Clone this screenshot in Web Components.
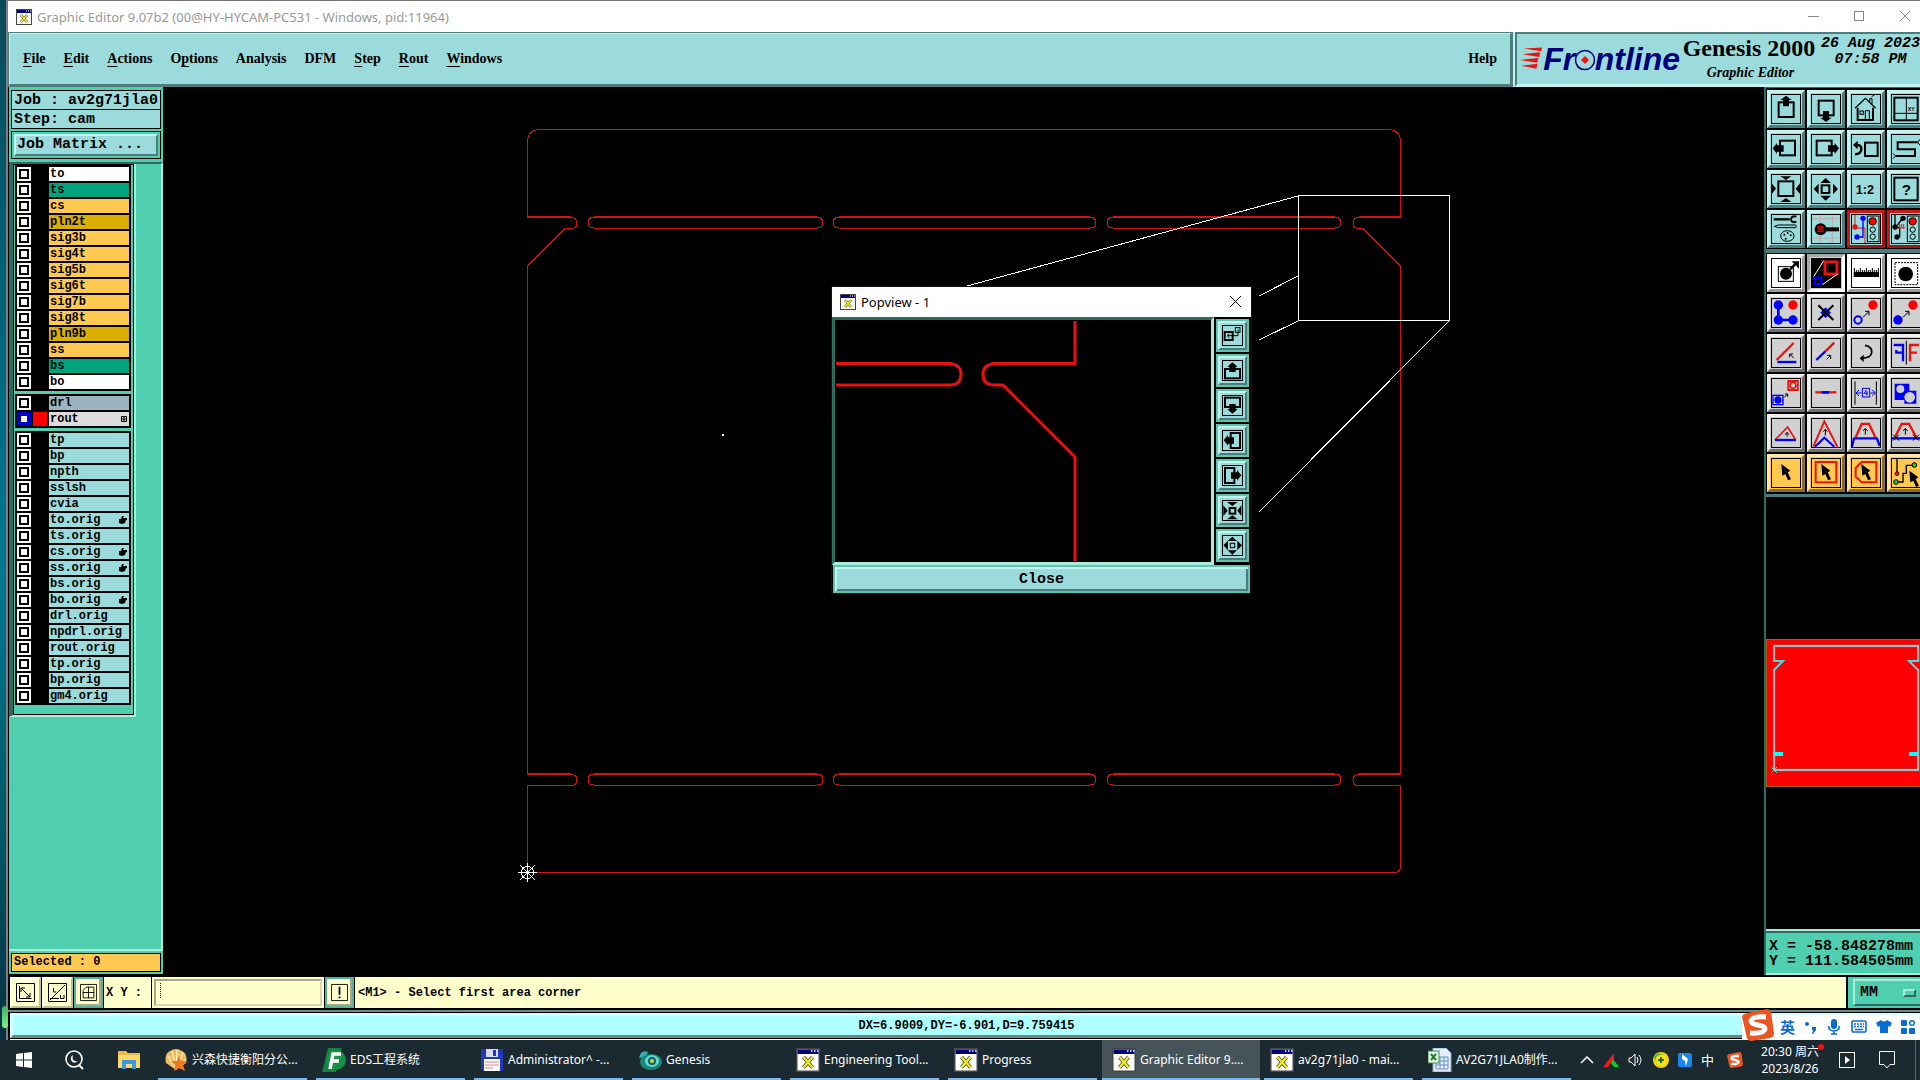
<!DOCTYPE html>
<html lang="en">
<head>
<meta charset="utf-8">
<title>Graphic Editor 9.07b2</title>
<style>
html,body{margin:0;height:100%}
body{display:flex;flex-direction:column;height:100vh;overflow:hidden;background:#000;color:#000;font-family:"Liberation Mono",monospace;
--face:#9bdbdb;--lite:#c4f4f2;--dark:#4c7c7c;--mint:#50cfb0;--mlite:#a8ecdc;--mdark:#2c6c5e;--ui:"Noto Sans","Noto Sans CJK SC",sans-serif}
</style>
</head>
<body>
<gx-editor></gx-editor>
<gx-taskbar></gx-taskbar>
<script>
const define=(name,html,init)=>{
  const t=document.createElement('template');
  customElements.define(name,class extends HTMLElement{
    connectedCallback(){
      if(this.shadowRoot)return;
      t.innerHTML=typeof html==='function'?html(this):html;
      this.attachShadow({mode:'open'}).append(t.content.cloneNode(true));
      if(init)init(this,this.shadowRoot);
    }
  });
};
const B='#0000ff',R='#e81410',K='#000';
const box=(x,y,w,h,s=5,c=K,f='none')=>`<rect x="${x}" y="${y}" width="${w}" height="${h}" fill="${f}" stroke="${c}" stroke-width="${s}"/>`;
const ln=(d,c=K,s=3,x='')=>`<path d="${d}" fill="none" stroke="${c}" stroke-width="${s}" ${x}/>`;
const fl=(d,c=K)=>`<path d="${d}" fill="${c}"/>`;
const dot=(x,y,r,c=K,s='none',w=0)=>`<circle cx="${x}" cy="${y}" r="${r}" fill="${c}" stroke="${s}" stroke-width="${w}"/>`;
const tx=(x,y,z,t)=>`<text x="${x}" y="${y}" font-family="Liberation Sans" font-weight="bold" font-size="${z}">${t}</text>`;
const light=box(49,6,35,77,3)+dot(65,22,11,'#f00',K,3)+dot(65,47,8,'none',K,3)+dot(65,68,8,'none',K,3);
const cursor=fl('M31 18L58 38L50 43L60 64L51 67L43 48L34 53Z');
/* toolbox glyphs on a 90-unit grid */
const ICON={
 up:box(23,25,45,44,6)+fl('M45 5L62 18H54V37H36V18H28Z'),
 down:box(23,20,45,44,6)+fl('M45 84L62 71H54V51H36V71H28Z'),
 home:ln('M12 43L43 13L74 43',K,4)+ln('M20 41V78H66V41',K,6)+ln('M56 25V14H63V30')+box(27,51,10,10,3)+ln('M43 78V50H55V78')+ln('M62 8L70 3',K,3),
 xy:box(10,11,70,68,6)+ln('M46 11V79M10 58H80')+tx(50,50,16,'XY'),
 left:box(27,20,45,44,6)+fl('M5 43L18 27V34H38V53H18V60Z'),
 right:box(17,20,45,44,6)+fl('M84 43L71 27V34H51V53H71V60Z'),
 back:box(42,26,38,40,6)+ln('M12 33H20Q32 34 31 46Q30 60 12 61',K,7)+fl('M6 33L20 20V46Z'),
 snake:ln('M80 25H20V46H72V66H14',K,6)+ln('M80 25L88 15M80 25L88 35M14 66L6 58M14 66L6 74'),
 zin:box(22,22,45,44,6)+fl('M28 7H61L45 18ZM28 84H61L45 72ZM2 28V60L15 44ZM87 28V60L74 44Z'),
 zout:box(32,34,23,23,6)+fl('M28 27H60L44 12ZM28 65H60L44 80ZM23 29V61L8 45ZM66 29V61L81 45Z'),
 half:tx(14,59,38,'1:2'),
 help:box(10,11,70,68,6)+tx(32,62,46,'?'),
 tools:ln('M8 16H56',K,7)+ln('M76 8Q62 4 60 16Q62 28 76 23',K,6)+ln('M10 37L22 33H74Q78 37 74 41H22Z')+`<ellipse cx="49" cy="66" rx="20" ry="16" fill="none" stroke="#000" stroke-width="3"/>`+dot(40,62,3)+dot(50,57,3)+dot(59,64,3)+dot(44,74,3),
 probe:ln('M28 0V90M64 0V90M0 14H90M0 72H90','#c9a7b0',3)+ln('M40 46H84',K,12)+dot(29,46,18)+box(21,38,15,15,3,R)+box(27,44,4,4,3,R),
 net1:ln('M12 0V42M12 42H42V90',R)+ln('M36 12V69H18',B,4)+dot(12,39,8,R)+dot(36,13,8,B)+dot(18,69,8,B)+light,
 net2:ln('M12 0V42L36 12M26 42V68H18M12 40H26',K,4)+ln('M20 42V30M26 42V30M32 42V30M38 42V30M16 42H42',R,3)+dot(12,39,8)+dot(36,13,8)+dot(18,69,8)+light,
 sel1:box(22,26,45,44,3)+dot(45,47,18)+ln('M58 34L74 17',K,7)+fl('M62 10H84V32Z'),
 pop:`<rect width="90" height="90"/>`+box(42,12,36,36,9,R)+box(11,59,20,20,7,B)+ln('M8 56L38 8M34 80L80 48','#fff'),
 ruler:fl('M8 42H84V57H8Z')+ln('M10 30V44M16 36V44M22 36V44M28 30V44M34 36V44M40 36V44M46 30V44M52 36V44M58 36V44M64 30V44M70 36V44M76 36V44M82 30V44'),
 selbox:`<rect x="12" y="14" width="68" height="66" fill="none" stroke="#000" stroke-width="3" stroke-dasharray="6 3"/>`+dot(44,48,22),
 chain:ln('M22 21V66H66',B,8)+dot(22,21,14,B)+dot(22,66,14,B)+dot(66,66,14,B)+dot(66,21,14,'#f00'),
 del:fl('M44 28L60 44L44 60L28 44Z',B)+ln('M22 22L67 66M67 22L22 66',K,6),
 cp:dot(66,21,14,'#f00')+dot(21,66,11,'none',B,6)+ln('M36 58L52 42')+ln('M42 40H54V52'),
 mv:dot(66,21,14,'#f00')+dot(21,66,14,B)+ln('M36 58L52 42')+ln('M42 40H54V52'),
 ang:ln('M17 66L68 15',R,7)+ln('M19 72H76',B,7)+ln('M68 60L56 48M56 58V48H66'),
 ext:ln('M16 66L43 40',B,7)+ln('M43 40L70 14',R,7)+ln('M47 64L58 53M48 52H59V63'),
 rot:ln('M42 22Q64 26 62 44Q60 60 32 61',K,5)+fl('M26 61L38 50V72Z'),
 mir:ln('M8 21H36V70M36 44H16V36',B,7)+ln('M46 8V80')+ln('M84 21H57V70M57 44H78',R,7),
 step:box(52,9,28,27,6,R,'#fff')+dot(66,22,9,'#d0d0d0',R,5)+box(6,52,30,28,4,B,'#d0d0d0')+dot(21,66,11,B)+ln('M40 58L50 48M42 48H50V56'),
 seg:ln('M13 43H76',R,7)+ln('M32 43H54',B,8),
 gap:ln('M12 10V80M76 10V80')+ln('M16 45H32M58 45H72M24 36L15 45L24 54M64 36L73 45L64 54',B,3)+box(34,31,22,26,3,B)+ln('M46 36L40 46H50M48 40V52',B,3),
 pads:fl('M11 17H55V38H76V77H40V66H11Z',B)+dot(28,33,12,'#d0d0d0')+dot(56,58,16,'#d0d0d0'),
 tri:ln('M12 66L50 27L74 66',R,5)+ln('M12 66H75',B,7)+ln('M48 56V44M42 50L48 43L54 50'),
 peak:ln('M7 86L40 10L79 86',R,6)+ln('M12 86L40 59L70 86',B,6)+ln('M43 52V34M37 41L43 34L49 41'),
 trap:ln('M14 58L32 18H54L73 58',R,7)+ln('M2 88L9 61H78L86 84',B,7)+ln('M43 50V32M36 39L43 31L50 39'),
 trap2:ln('M12 58L32 18H54L76 58',R,7)+ln('M0 61H90',B,7)+ln('M43 50V32M36 39L43 31L50 39')+ln('M6 50L24 68M24 50L6 68M66 50L84 68M84 50L66 68'),
 cur:cursor,
 curbox:box(14,12,62,61,6,R)+cursor,
 curpoly:ln('M32 12H76V73H32L14 56V30Z',R,6)+cursor,
 curnet:ln('M18 0V46M15 72H36V46H46V22H70',K,4)+dot(18,47,6,R,K,2)+dot(70,21,7,'#2c2',K,3)+dot(15,72,7,'#2c2',K,3)+`<g transform="translate(24 20)">${cursor}</g>`
};
/* popview glyphs on a 63-unit grid */
const MINI={
 link:box(8,21,24,24,6)+box(40,8,14,14,3)+ln('M48 14V32H16M22 26L15 32L22 38'),
 up:box(9,27,45,28,6)+fl('M31 7L47 20H41V36H22V20H16Z'),
 down:box(9,8,45,28,6)+fl('M31 56L47 43H41V27H22V43H16Z'),
 left:box(26,9,28,45,6)+fl('M5 31L18 15V22H36V41H18V47Z'),
 right:box(9,9,28,45,6)+fl('M58 31L45 15V22H27V41H45V47Z'),
 zin:box(23,24,17,17,6)+fl('M15 6H47L31 18ZM15 58H47L31 46ZM4 16V48L17 32ZM58 16V48L46 32Z'),
 zout:box(25,25,13,13,3)+fl('M17 18H45L31 5ZM17 46H45L31 59ZM18 17V46L4 31ZM46 17V46L60 31Z')
};
const svg=(vb,w,h,inner,extra='')=>`<svg viewBox="${vb}" width="${w}" height="${h}" ${extra} aria-hidden="true">${inner}</svg>`;
const xwin=n=>svg('0 0 16 16',n,n,`<rect x=".5" y=".5" width="15" height="15" fill="#fff" stroke="#444"/><rect x="1" y="1" width="14" height="3" fill="#000080"/><path d="M10 2h1M12 2h1M14 2h1" stroke="#fff"/><path d="M5 6L11 13M11 6L5 13" stroke="#333" stroke-width="2.4"/><path d="M5 6L11 13M11 6L5 13" stroke="#f4ec18" stroke-width="1.6"/>`);

define('gx-tool',el=>`<style>
:host{display:block}
button{display:block;box-sizing:border-box;width:38px;height:38px;margin:0;padding:1px;border:3px solid;border-color:var(--a) var(--b) var(--b) var(--a);background:var(--f);font:inherit}
svg{display:block;outline:1px solid #000;outline-offset:-1px;overflow:hidden}
:host([tone=teal]){--f:#9bdbdb;--a:#c4f4f2;--b:#4c7c7c}
:host([tone=red]){--f:#9bdbdb;--a:#c81818;--b:#a01414}
:host([tone=white]){--f:#fff;--a:#fff;--b:#9a9a9a}
:host([tone=grey]){--f:#d0d0d0;--a:#f0f0f0;--b:#707070}
:host([tone=navy]){--f:#d0d0d0;--a:#a8a8a8;--b:#fff}
:host([tone=gold]){--f:#ffc850;--a:#ffe6a8;--b:#8a6c2c}
</style><button type="button" aria-label="${el.getAttribute('icon')}">${svg('0 0 90 90',30,30,ICON[el.getAttribute('icon')])}</button>`);

define('gx-titlebar',`<style>
:host{display:flex;align-items:center;box-sizing:border-box;height:32px;padding:0 8px;gap:5px;background:#fff;border-top:1px solid #777;color:#999;font:13px/16px var(--ui)}
span{flex:1;white-space:nowrap}
button{border:0;background:none;padding:0;width:46px;height:28px;color:#888}
.c{display:flex;margin-right:-16px}
svg{display:block;margin:auto}
:host>svg{margin:0}
</style>${xwin(16)}<span><slot></slot></span><div class="c">
<button aria-label="Minimize">${svg('0 0 11 11',11,11,'<path d="M0 5.5H11" stroke="currentColor"/>')}</button>
<button aria-label="Maximize">${svg('0 0 11 11',11,11,'<rect x=".5" y=".5" width="9" height="9" fill="none" stroke="currentColor"/>')}</button>
<button aria-label="Close window">${svg('0 0 11 11',11,11,'<path d="M0 0L10 10M10 0L0 10" stroke="currentColor"/>')}</button></div>`);

define('gx-menubar',`<style>
:host{display:flex;align-items:center;box-sizing:border-box;height:55px;border:solid;border-width:2px 3px 3px 2px;border-color:var(--lite) var(--dark) var(--dark) var(--lite);background:var(--face);outline:1px solid var(--dark);outline-offset:-1px;padding:0 13px 0 13px;font:bold 14px/18px "Liberation Serif",serif;gap:18px}
button{font:inherit;border:0;background:none;padding:0;color:#000}
u{text-underline-offset:3px}
.h{margin-left:auto}
</style><button><u>F</u>ile</button><button><u>E</u>dit</button><button><u>A</u>ctions</button><button>O<u>p</u>tions</button><button>Analysis</button><button>DFM</button><button><u>S</u>tep</button><button><u>R</u>out</button><button><u>W</u>indows</button><button class="h">Help</button>`);

define('gx-brand',`<style>
:host{display:flex;box-sizing:border-box;height:55px;width:405px;border:solid;border-width:2px 0 3px 2px;border-color:var(--dark) var(--dark) var(--lite) var(--dark);background:var(--face);overflow:hidden;padding-left:3px;white-space:nowrap}
.logo{display:flex;align-items:center;width:160px;color:#00007c;font:italic bold 32px/32px "Liberation Sans",sans-serif}
.o{position:relative}.o svg{position:absolute;left:-1px;top:8px}
.t{text-align:center;width:143px;padding-top:1px;font:bold 24px/26px "Liberation Serif",serif}
.t em{display:block;font-size:14px;line-height:24px;padding-left:3px}
.d{text-align:center;font:italic bold 15px/16px "Liberation Mono",monospace;padding:2px 0 0 3px}
</style><div class="logo">${svg('0 0 24 24',24,24,'<path d="M4 1L23 0L22 4ZM3 7L21 5L20 10ZM0 13L19 11L18 16ZM1 19L18 17L17 22Z" fill="#f01010"/>')}<span>Fr<span class="o">o${svg('0 0 22 22',22,22,'<circle cx="11" cy="11" r="9.5" fill="#9bdbdb" stroke="#00007c" stroke-width="1.5"/><path d="M11 7L15 11L11 15L7 11Z" fill="#f01010"/>')}</span>ntline</span></div>
<div class="t">Genesis 2000<em>Graphic Editor</em></div><div class="d">26 Aug 2023<br>07:58 PM</div>`);

const LAYERS=[
 [['to','#fff'],['ts','#00a47c'],['cs','#ffc850'],['pln2t','#dcae00'],['sig3b','#ffc850'],['sig4t','#ffc850'],['sig5b','#ffc850'],['sig6t','#ffc850'],['sig7b','#ffc850'],['sig8t','#ffc850'],['pln9b','#dcae00'],['ss','#ffc850'],['bs','#00a47c'],['bo','#fff']],
 [['drl','#9bb5c0'],['rout','#dcdcdc','grid']],
 ['tp','bp','npth','sslsh','cvia','to.orig*','ts.orig','cs.orig*','ss.orig*','bs.orig','bo.orig*','drl.orig','npdrl.orig','rout.orig','tp.orig','bp.orig','gm4.orig'].map(n=>[n.replace('*',''),'#9bdbdb',n.includes('*')?'hand':''])];
const MARK={hand:svg('0 0 8 8',8,8,'<path d="M3 0H5L4 2H8V4H7L6 7L3 8L0 7V3L2 3Z"/>'),grid:svg('0 0 6 6',6,6,'<path d="M.5 .5H5.5V5.5H.5ZM3 0V6M0 3H6" fill="none" stroke="#000"/>')};

define('gx-layer',el=>`<style>
:host{display:flex;height:14px;background:#000}
input{appearance:none;margin:0;width:14px;height:14px;border:2px solid #fff;box-sizing:border-box;padding:2px;background:linear-gradient(#fff,#fff) center/6px 6px no-repeat #000}
input:checked{border-color:#0000c8;background-color:#0000c8}
i{width:18px}
input:checked+i{background:linear-gradient(#f00,#f00) 2px 0/14px 14px no-repeat}
label{flex:1;display:flex;align-items:center;justify-content:space-between;padding:0 2px 0 1px;font:bold 12px/14px "Liberation Mono",monospace;background:${el.getAttribute('tint')}}
</style><input type="checkbox" id="c" ${el.getAttribute('mark')==='grid'?'checked':''}><i></i><label for="c"><span><slot></slot></span>${MARK[el.getAttribute('mark')]||''}</label>`);

define('gx-layers',`<style>
:host{display:flex;flex-direction:column;box-sizing:border-box;background:var(--mint);padding:3px 2px 2px 2px;border-left:1px solid #000}
.cell{box-sizing:border-box;border:1px solid #000;background:var(--face);height:20px;font:bold 15px/20px "Liberation Mono",monospace;padding:0 2px;white-space:nowrap}
.cell+.cell{margin-top:-1px}
.jm{border:1px solid #000;margin-top:2px;padding:2px}
.jm button{display:block;width:100%;height:22px;text-align:left;padding:0 1px;font:bold 15px/16px "Liberation Mono",monospace;background:var(--face);border:2px solid;border-color:var(--lite) var(--dark) var(--dark) var(--lite)}
.area{flex:1;margin:3px -2px 0 -2px;border-right:2px solid var(--mlite);border-bottom:2px solid var(--mlite);border-top:2px solid var(--mdark)}
.list{border-left:4px solid var(--mdark);border-right:2px solid var(--mlite);border-bottom:2px solid var(--mlite);width:121px}
.in{border:1px solid #000;padding:0 2px 9px 1px}
.g{background:#000;padding:2px;display:flex;flex-direction:column;gap:2px;margin-bottom:3px}
.g:last-child{margin-bottom:0}
.sel{margin-top:2px;background:#ffc850;font-size:12px;height:19px;line-height:17px}
</style><div class="cell">Job : av2g71jla0</div><div class="cell">Step: cam</div><div class="jm"><button>Job Matrix ...</button></div>
<div class="area"><div class="list"><div class="in">${LAYERS.map(g=>`<div class="g">${g.map(l=>`<gx-layer tint="${l[1]}" mark="${l[2]||''}">${l[0]}</gx-layer>`).join('')}</div>`).join('')}</div></div></div>
<div class="cell sel">Selected : 0</div>`);

const slots=(y)=>[[588,823],[833,1096],[1107,1341]].map(([a,b])=>`<path d="M${a+6} ${y+11}Q${a} ${y+11} ${a} ${y+6}Q${a} ${y} ${a+6} ${y}H${b-6}Q${b} ${y} ${b} ${y+6}Q${b} ${y+11} ${b-6} ${y+11}Z"/><path d="M${a+6} ${y}H${b-6}" stroke-width="2"/>`).join('');
define('gx-canvas',`<style>
:host{display:block;position:relative;background:#000;overflow:hidden}
.b{display:block;width:100%;height:100%}
gx-popview{position:absolute;left:669px;top:200px}
</style>${`<svg class="b" viewBox="163 87 1601 889" preserveAspectRatio="xMidYMid meet" shape-rendering="crispEdges" role="img" aria-label="Panel outline">
<g fill="none" stroke="#d01414" stroke-width="1">
<path d="M527.5 217V142Q527.5 129.5 540 129.5H1388Q1400.5 129.5 1400.5 142V217"/>
<path d="M527 217H571M1359 217H1401" stroke-width="2"/>
<path d="M571 217Q577 218 577 223Q577 228.500 571 228.5H565L527.5 266V774M1359 217Q1353 218 1353 223Q1353 228.500 1359 228.5H1363L1400.5 266V774"/>
<path d="M527 774H571M1359 774H1401" stroke-width="2"/>
<path d="M571 774Q577 775 577 779.500Q577 785.500 571 785.5H527.5V872.5H1394Q1400.5 872.5 1400.5 866V785.5H1359Q1353 785.500 1353 779.500Q1353 775 1359 774"/>
${slots(217)}${slots(774)}</g>
<g fill="none" stroke="#fff"><rect x="1298.5" y="195.5" width="151" height="125"/><path d="M967 286L1298 196M1259 296L1298 276M1259 340L1298 321M1259 512L1449 321"/>
<circle cx="527.5" cy="872.5" r="6"/><path d="M518 872.5H537M527.5 863V882M520 865L535 880M535 865L520 880"/></g><rect x="722" y="434" width="2" height="2" fill="#fff"/></svg>`}<gx-popview></gx-popview>`);

define('gx-popview',`<style>
:host{display:block;width:419px;background:#000;outline:1px solid #111}
header{display:flex;align-items:center;gap:5px;height:30px;background:#fff;padding:0 10px 0 8px;font:13px/16px var(--ui)}
header span{flex:1}
button{border:0;background:none;padding:0;display:block}
.m{display:flex;gap:2px}
.v{flex:1;border:3px solid;border-color:var(--mdark) var(--mlite) var(--mlite) var(--mdark);height:242px}
.v svg{display:block}
nav{display:flex;flex-direction:column;gap:2px;padding:2px 2px 0 0}
nav button,.c{border:2px solid #60c4ac;outline:0}
nav i{display:block;box-sizing:border-box;width:29px;height:29px;border:2px solid;border-color:var(--lite) var(--dark) var(--dark) var(--lite);background:var(--face);padding:2px}
nav svg{display:block;outline:1px solid #000;outline-offset:-1px}
.c{width:417px;margin:0 1px;height:28px;padding-top:1px;font:bold 15px/20px "Liberation Mono",monospace;background:var(--face);box-shadow:inset 2px 2px var(--lite),inset -2px -2px var(--dark)}
</style><header>${xwin(16)}<span>Popview - 1</span><button aria-label="Close popview">${svg('0 0 11 11',11,11,'<path d="M0 0L11 11M11 0L0 11" stroke="#000"/>')}</button></header>
<div class="m"><div class="v">${svg('835 320 376 242','100%','242','<g fill="none" stroke="#e81010" stroke-width="3"><path d="M836 363.5H950Q961 365 961 374Q961 385 950 385H836M1075 321V363.5H994Q983 365 983 374Q983 385 994 385H1003L1075 457V561"/></g>')}</div>
<nav>${Object.keys(MINI).map(k=>`<button aria-label="${k}"><i>${svg('0 0 63 63',21,21,MINI[k])}</i></button>`).join('')}</nav></div><button class="c">Close</button>`);

const ROWS=[['teal','up down home xy'],['teal','left right back snake'],['teal','zin zout half help'],['teal','tools probe net1 net2'],['white','sel1 pop ruler selbox'],['grey','chain del cp mv'],['grey','ang ext rot mir'],['grey','step seg gap pads'],['grey','tri peak trap trap2'],['gold','cur curbox curpoly curnet']];
const rowHtml=r=>`<div class="r">${r[1].split(' ').map(i=>`<gx-tool icon="${i}" tone="${i.startsWith('net')?'red':i==='pop'?'navy':r[0]}"></gx-tool>`).join('')}</div>`;
define('gx-toolbox',`<style>
:host{display:flex;flex-direction:column;border-left:2px solid var(--mdark);box-sizing:border-box;background:#000;overflow:hidden}
.p{display:flex;flex-direction:column;gap:2px;padding:2px 1px 0;border-top:1px solid var(--mdark)}
.p+.p{border-top:4px solid var(--dark);margin-top:1px;padding-top:1px}
.r{display:flex;gap:2px}
.e{border-top:3px solid var(--dark);margin-top:2px}
.s{flex:1;display:flex;align-items:center;padding-top:0}
.s svg{display:block;flex:none}
.x{box-sizing:border-box;height:46px;border:solid;border-width:2px 0 2px 0;border-color:var(--mlite);background:var(--mint);box-shadow:inset 0 2px var(--mdark);padding:8px 3px 0;font:bold 15px/15px "Liberation Mono",monospace;white-space:pre}
</style><div class="p">${ROWS.slice(0,4).map(rowHtml).join('')}</div><div class="p">${ROWS.slice(4).map(rowHtml).join('')}</div><div class="e"></div>
<div class="s">${svg('0 0 154 148',154,148,'<rect x=".5" y=".5" width="160" height="147" fill="#f00" stroke="#a06010"/><g fill="none" stroke="#e0e0e0" stroke-width="1"><path stroke="#606060" stroke-width="3" d="M8.500 23V7H152.500V23M8.500 30V131H152.500V30"/><path stroke="#b4b4b4" stroke-width="2" d="M8 23V7H152V23M8 30V131H152V30"/></g><g fill="none" stroke="#40e0e0" stroke-width="2"><path d="M7 22H17L8 31M153 22H143L152 31"/><path stroke="#0ff" stroke-width="4" d="M8 115H17M143 115H152"/><path stroke-width="1" d="M5 128L11 134M11 128L5 134"/></g>')}</div>
<div class="x">X = -58.848278mm
Y = 111.584505mm</div>`);

define('gx-prompt',`<style>
:host{display:flex;box-sizing:border-box;height:34px;padding:1px 0 2px 2px;background:#000;font:bold 12px/16px "Liberation Mono",monospace;gap:1px}
.k{display:flex;align-items:center;background:#ffffcc;white-space:nowrap}
.q{box-sizing:border-box;width:31px;height:31px;padding:3px;background:#ffffcc;border:2px solid;border-color:#fffff0 #bdbd98 #bdbd98 #fffff0}
.g{width:29px;background:#ffffcc;border:2px solid #50b49c;box-shadow:inset -2px -2px #a8a888}
.g.q{padding:2px}
svg{display:block;margin:auto}
label{padding:0 9px 0 2px}
.i{padding:0 2px}
input{box-sizing:border-box;width:168px;height:27px;background:repeating-linear-gradient(#222 0 1px,transparent 1px 2px) 4px 2px/1px 15px no-repeat #ffffcc;border:2px solid;border-color:#a8a888 #d8d8b4 #d8d8b4 #a8a888;font:inherit;padding:0 4px}
.msg{flex:1;padding-left:3px}
.mm{width:72px;box-sizing:border-box;background:var(--mint);padding-left:5px;margin-left:1px;overflow:hidden}
.w{position:relative;flex:none}
select{appearance:none;width:84px;height:27px;border:2px solid;border-color:var(--mlite) var(--mdark) var(--mdark) var(--mlite);background:var(--mint);font:bold 15px/18px "Liberation Mono",monospace;padding:0 5px;border-radius:0;color:#000}
.w::after{content:"";position:absolute;left:50px;top:10px;width:9px;height:4px;border:2px solid;border-color:var(--mlite) var(--mdark) var(--mdark) var(--mlite)}
</style>
<button class="q" aria-label="Snap">${svg('0 0 19 19',19,19,'<path d="M.5 .5H18.500V18.500H.5ZM3.500 3V15.500H15.500" fill="none" stroke="#000"/><path d="M5 5L14 14M5 9V5H9M14 10V14H10" fill="none" stroke="#000"/>')}</button>
<button class="q" aria-label="Delta">${svg('0 0 19 19',19,19,'<path d="M.5 .5H18.500V18.500H.5ZM2 17L17 2M2 15.500H11" fill="none" stroke="#000"/><path d="M5.500 5V9H8M12.500 12V15.500H16V12" fill="none" stroke="#000"/>')}</button>
<button class="q g" aria-label="Grid">${svg('0 0 19 19',17,19,'<path d="M.5 .5H18.500V18.500H.5ZM7 3.500H15.500V15.500H3.500V7ZM9.500 3V16M3 9.500H16" fill="none" stroke="#000"/>')}</button>
<label class="k" for="xy">X Y :</label><div class="k i"><input id="xy"></div>
<button class="q g" aria-label="Alert">${svg('0 0 19 19',17,19,'<path d="M.5 .5H18.500V18.500H.5Z" fill="none" stroke="#000"/><path d="M9.500 3V12M9.500 14V16" stroke="#000" stroke-width="2"/>')}</button>
<div class="k msg">&lt;M1&gt; - Select first area corner</div>
<div class="k mm"><div class="w"><select aria-label="Units"><option>MM</option></select></div></div>`);

define('gx-status',`<style>
:host{display:block;box-sizing:border-box;height:30px;border-top:2px solid #648c8c;background:#000;padding:1px 0 0 2px}
div{height:19px;border:solid;border-width:3px 0 3px 3px;border-color:#d4ffff #648c8c #648c8c #d4ffff;background:#b0ffff;text-align:center;font:bold 12px/20px "Liberation Mono",monospace}
p{margin:1px 0 0;height:1px;background:#e8ffff}
</style><div>DX=6.9009,DY=-6.901,D=9.759415</div><p></p>`);

const sogou=n=>svg('0 0 32 32',n,n,'<path d="M5 4L25 0Q28 0 29 3L32 24Q32 28 28 29L9 32Q6 32 5 29L0 8Q0 5 5 4Z" fill="#ec5420"/><path d="M24 8Q10 7 9 12Q9 15 16 16Q23 17 23 20Q22 25 8 24" fill="none" stroke="#fff" stroke-width="5"/>');
define('gx-ime',`<style>
:host{display:flex;align-items:center;width:178px;height:24px;background:#fff;font:bold 15px/20px "Noto Sans CJK SC",sans-serif;color:#0a6cd0}
.s{margin:-4px 6px 0 0}.s svg{display:block}
.r{display:flex;flex:1;align-items:center;justify-content:space-between;padding-right:5px}
.r svg{display:block}
</style><div class="s">${sogou(32)}</div><div class="r"><span>英</span>
${svg('0 0 14 14',14,14,'<circle cx="3" cy="4" r="2" fill="#0a6cd0"/><path d="M8 7H12V10L9 14H8L9 10H8Z" fill="#0a6cd0"/>')}
${svg('0 0 14 16',14,16,'<rect x="4" y="0" width="6" height="10" rx="3" fill="#0a6cd0"/><path d="M1.500 7Q2 12 7 12Q12 12 12.500 7M7 12V15M4 15H10" fill="none" stroke="#0a6cd0" stroke-width="1.600"/>')}
${svg('0 0 16 14',16,14,'<rect x="1" y="1" width="14" height="11" rx="1" fill="none" stroke="#0a6cd0" stroke-width="1.600"/><path d="M3 4H13M3 6.500H13" stroke="#0a6cd0" stroke-width="1.500" stroke-dasharray="2 1"/><path d="M4 9.500H12" stroke="#0a6cd0" stroke-width="1.500"/>')}
${svg('0 0 16 14',16,14,'<path d="M0 3L5 0Q8 3 11 0L16 3L14 7L12 6V13H4V6L2 7Z" fill="#0a6cd0"/>')}
${svg('0 0 14 14',14,14,'<rect width="6" height="6" rx="1" fill="#0a6cd0"/><circle cx="11" cy="3" r="2.300" fill="none" stroke="#0a6cd0" stroke-width="1.500"/><rect y="8" width="6" height="6" rx="1" fill="#0a6cd0"/><rect x="8" y="8" width="6" height="6" rx="1" fill="#0a6cd0"/>')}</div>`);

define('gx-editor',`<style>
:host{flex:1;min-height:0;display:flex;position:relative}
.wall{width:6px;background:linear-gradient(#0a4a5c,#006478 30%,#007890 55%,#005868 80%,#083040);border-right:2px solid #807c80}
.w{flex:1;min-width:0;display:flex;flex-direction:column;background:#000}
.top{display:flex;background:var(--lite);height:55px;gap:2px}
gx-menubar{flex:1}
.mid{flex:1;min-height:0;display:grid;grid-template-columns:155px 1fr 156px}
gx-layers{margin-bottom:2px}
gx-toolbox{margin-bottom:1px}
gx-ime{position:absolute;right:0;bottom:1px}
.knob{position:absolute;left:2px;bottom:12px;width:6px;height:22px;border-radius:3px;background:linear-gradient(#40b060,#80f080)}
</style><div class="wall"></div><div class="w"><gx-titlebar>Graphic Editor 9.07b2 (00@HY-HYCAM-PC531 - Windows, pid:11964)</gx-titlebar>
<div class="top"><gx-menubar></gx-menubar><gx-brand></gx-brand></div>
<div class="mid"><gx-layers></gx-layers><gx-canvas></gx-canvas><gx-toolbox></gx-toolbox></div>
<gx-prompt></gx-prompt><gx-status></gx-status></div><div class="knob"></div><gx-ime></gx-ime>`);

const APP={
 shell:svg('0 0 24 24',24,24,'<path d="M12 22L2 15Q0 6 6 3Q12 -1 18 3Q24 6 22 15Z" fill="#f0bc60"/><path d="M12 21L4 8M12 21L8 3M12 21L13 2M12 21L19 5M12 21L22 11" stroke="#fff0c0" stroke-width="1.200"/><path d="M15 8L17 13L23 13L19 17L21 23L15 20L10 23L11 17L7 13L13 13Z" fill="#f07820"/>'),
 eds:svg('0 0 24 24',24,24,'<path d="M6 0H20L14 24H0Z" fill="#168040"/><circle cx="14" cy="12" r="10" fill="#189048"/><path d="M8 21L11 6H19M10 13H17" fill="none" stroke="#fff" stroke-width="3.500"/>'),
 disk:svg('0 0 24 24',24,24,'<path d="M1 1H23V23H3L1 21Z" fill="#2038c0"/><rect x="6" y="1" width="12" height="8" fill="#d8dce8"/><rect x="13" y="2" width="3" height="6" fill="#2038c0"/><rect x="4" y="11" width="16" height="12" fill="#fff"/><path d="M5 14H19M5 17H19M5 20H13" stroke="#e08080"/>'),
 gen:svg('0 0 24 24',24,24,'<path d="M1 10Q3 1 10 4L8 9Z" fill="#30b0b0"/><ellipse cx="13" cy="14" rx="11" ry="8" fill="#188878"/><ellipse cx="14" cy="13" rx="7" ry="6" fill="#60d8d0"/><circle cx="14" cy="13" r="4" fill="#106060"/><circle cx="14" cy="13" r="2" fill="#d0d840"/>'),
 xls:svg('0 0 24 24',24,24,'<path d="M5 0H18L23 5V24H5Z" fill="#e4eefa" stroke="#88a8d0"/><path d="M8 9H20V21H8ZM8 13H20M8 17H20M12 9V21M16 9V21" fill="none" stroke="#6890c8"/><rect y="3" width="11" height="12" fill="#e8f4e8" stroke="#409040"/><path d="M3 6L8 12M8 6L3 12" stroke="#208030" stroke-width="2"/>'),
 x:xwin(24)};
define('gx-task',el=>`<style>
:host{display:block;width:158px;height:40px}
button{display:flex;position:relative;align-items:center;gap:4px;box-sizing:border-box;width:100%;height:40px;border:0;padding:0 4px 0 10px;background:linear-gradient(#76b9ed,#76b9ed) 4px 38px/149px 2px no-repeat;color:#fff;font:12px/16px var(--ui);white-space:nowrap;text-align:left}
:host([active]) button{background:linear-gradient(#76b9ed,#76b9ed) 0 38px/158px 2px no-repeat #46545a}
svg{flex:none}
</style><button>${APP[el.getAttribute('app')]}<span><slot></slot></span></button>`);
define('gx-taskbar',`<style>
:host{display:flex;height:40px;background:#1b2a30;color:#fff;font:12px/17px var(--ui);align-items:center}
.l{display:flex;align-items:center;gap:33px;padding-left:16px;width:138px}
button{border:0;background:none;padding:0;color:inherit;font:inherit;display:block;position:relative}
svg{display:block}
.t{display:flex;align-items:center;margin-left:auto}
.n{display:flex;align-items:center;gap:9px}
.n span{font-size:13px;margin-right:4px}
.clk{text-align:center;width:60px;margin:0 19px 0 17px}
.clk svg{position:absolute;right:-4px;top:1px}
.a{display:flex;gap:24px;padding-right:20px;border-right:1px solid #5a666a;height:40px;align-items:center;margin-right:4px}
</style><div class="l"><button aria-label="Start">${svg('0 0 16 16',16,16,'<path d="M0 2L7 1V7.500H0ZM8 1L16 0V7.500H8ZM0 8.500H7V15L0 14ZM8 8.500H16V16L8 15Z" fill="#fff"/>')}</button>
<button aria-label="Search">${svg('0 0 20 20',20,20,'<circle cx="9" cy="9" r="8" fill="none" stroke="#fff" stroke-width="1.600"/><path d="M14 15L18 19" stroke="#fff" stroke-width="2"/><path d="M8 5Q6 12 13 11Q8 15 6 10Q5 7 8 5" fill="#fff"/>')}</button>
<button aria-label="Files">${svg('0 0 22 20',22,20,'<path d="M0 1H8L10 3H22V18H0Z" fill="#f0b840"/><path d="M0 5H22V18H0Z" fill="#ffd868"/><path d="M4 19V10H18V19H14V14H8V19Z" fill="#3898e0"/>')}</button></div>
<gx-task app="shell">兴森快捷衡阳分公...</gx-task><gx-task app="eds">EDS工程系统</gx-task><gx-task app="disk">Administrator^ -...</gx-task><gx-task app="gen">Genesis</gx-task><gx-task app="x">Engineering Tool...</gx-task><gx-task app="x">Progress</gx-task><gx-task app="x" active>Graphic Editor 9....</gx-task><gx-task app="x">av2g71jla0 - mai...</gx-task><gx-task app="xls">AV2G71JLA0制作...</gx-task>
<div class="t"><div class="n">${svg('0 0 14 8',14,8,'<path d="M1 7L7 1L13 7" fill="none" stroke="#fff" stroke-width="1.500"/>')}
${svg('0 0 16 14',16,14,'<path d="M0 14L11 0V6L5 14Z" fill="#f01818"/><path d="M10 6L16 14H11L8 10Z" fill="#10c830"/>')}
${svg('0 0 16 14',16,14,'<path d="M1 5H3L7 1V13L3 9H1ZM9 4Q11 7 9 10M11 2Q15 7 11 12" fill="none" stroke="#fff"/>')}
${svg('0 0 16 16',16,16,'<circle cx="8" cy="8" r="8" fill="#f4d810"/><path d="M1 5Q5 -1 11 3L4 12Z" fill="#40b030"/><circle cx="8" cy="8" r="5.500" fill="#f8e020"/><path d="M8 5V11M5 8H11" stroke="#207020" stroke-width="2"/>')}
${svg('0 0 14 14',14,14,'<rect width="14" height="14" rx="2" fill="#1888f0"/><path d="M4 1L10 6L8 13L7 8L4 6Z" fill="#fff"/>')}<span>中</span>${sogou(16)}</div>
<button class="clk">20:30 周六<br>2023/8/26${svg('0 0 6 6',6,6,'<circle cx="3" cy="3" r="3" fill="#f01010"/>')}</button>
<div class="a"><button aria-label="Play">${svg('0 0 16 16',16,16,'<rect x=".5" y=".5" width="15" height="15" fill="none" stroke="#fff"/><path d="M6 4L11 8L6 12Z" fill="#fff"/>')}</button>
<button aria-label="Notifications">${svg('0 0 16 18',16,18,'<path d="M.5 .5H15.500V13.500H11L8 17L5 13.500H.5Z" fill="none" stroke="#fff"/>')}</button></div></div>`);
</script>
</body>
</html>
